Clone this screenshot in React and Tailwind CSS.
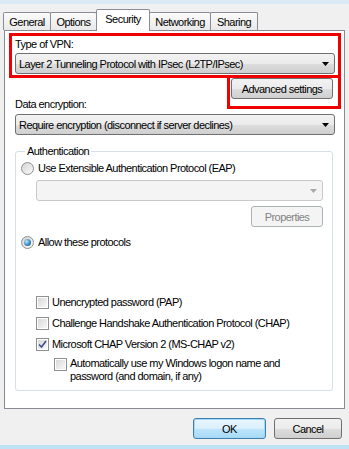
import { useState } from 'react'

const font = { fontFamily: '"Liberation Sans", Arial, sans-serif' }

const txt = 'text-[11px] leading-[14px] tracking-[-0.55px]'
const btnBg = 'bg-[linear-gradient(to_bottom,#f2f2f2_0%,#ebebeb_50%,#dddddd_51%,#cfcfcf_100%)]'

function Arrow({ color = '#000' }) {
  return (
    <svg width="7" height="4" viewBox="0 0 7 4">
      <path d="M0 0 L7 0 L3.5 4 Z" fill={color} />
    </svg>
  )
}

function Dropdown({ value, width }) {
  return (
    <div className={`h-[21px] ${width} border border-[#707070] rounded-[3px] ${btnBg} flex items-center justify-between pl-[3px] pr-[5px]`}>
      <span className={`${txt} whitespace-nowrap`}>{value}</span>
      <Arrow />
    </div>
  )
}

function Radio({ checked, label, onClick }) {
  return (
    <div className="flex items-center h-[14px] gap-[4px] cursor-default" onClick={onClick}>
      <div className="w-[13px] h-[13px] rounded-full border border-[#8e8f8f] bg-[linear-gradient(135deg,#d4d4d4,#fafafa)] flex items-center justify-center">
        {checked && <div className="w-[7px] h-[7px] rounded-full bg-[radial-gradient(circle_at_35%_35%,#bfe6fb,#3a8bc2_55%,#17507d)]" />}
      </div>
      <span className={`${txt} whitespace-nowrap`}>{label}</span>
    </div>
  )
}

function Check({ checked, onClick }) {
  return (
    <div onClick={onClick} className="w-[13px] h-[13px] shrink-0 border border-[#8e8f8f] bg-white p-px">
      <div className="w-full h-full bg-[linear-gradient(135deg,#d9d9d9,#f7f7f7)] flex items-center justify-center">
        {checked && (
          <svg width="9" height="9" viewBox="0 0 9 9">
            <path d="M1 4.5 L3.5 7 L8 1" stroke="#3c4f8f" strokeWidth="1.6" fill="none" />
          </svg>
        )}
      </div>
    </div>
  )
}

function CheckRow({ checked, label, onClick, className = '' }) {
  return (
    <div className={`flex items-center h-[14px] gap-[3px] ${className}`}>
      <Check checked={checked} onClick={onClick} />
      <span className={`${txt} whitespace-nowrap`}>{label}</span>
    </div>
  )
}

const tabs = [
  ['General', 'w-[48px]'],
  ['Options', 'w-[47px]'],
  ['Security', 'w-[54px]'],
  ['Networking', 'w-[62px]'],
  ['Sharing', 'w-[48px]'],
]

export default function App() {
  const [auth, setAuth] = useState('allow')
  const [pap, setPap] = useState(false)
  const [chap, setChap] = useState(false)
  const [mschap, setMschap] = useState(true)
  const [autoLogon, setAutoLogon] = useState(false)

  return (
    <div className="w-[349px] h-[449px] bg-[#f0f0f0] flex flex-col text-black overflow-hidden" style={font}>
      <div className="h-[4px] bg-[#d9eaf6]" />

      <div className="flex items-end h-[26px] pl-[3px] relative z-10">
        {tabs.map(([name, w]) => name === 'Security' ? (
          <div key={name} className={`${w} h-[22px] -ml-px -mb-px bg-white border border-b-0 border-[#898c95] rounded-t-[2px] flex items-start justify-center pt-[2px] ${txt}`}>
            {name}
          </div>
        ) : (
          <div key={name} className={`${w} h-[18px] -ml-px first:ml-0 border border-b-0 border-[#898c95] rounded-t-[2px] bg-[linear-gradient(to_bottom,#fbfbfb,#e9e9e9)] flex items-center justify-center ${txt}`}>
            {name}
          </div>
        ))}
      </div>

      <div className="ml-[4px] w-[341px] h-[379px] bg-white border border-[#898c95] flex flex-col">
        <div className="mt-[2px] ml-[4px] w-[332px] h-[45px] border-[3px] border-[#f00000] flex flex-col pl-[3px] pt-px">
          <div className={txt}>Type of VPN:</div>
          <div className="mt-[2px]">
            <Dropdown value="Layer 2 Tunneling Protocol with IPsec (L2TP/IPsec)" width="w-[320px]" />
          </div>
        </div>

        <div className="ml-[4px] w-[332px] -mt-[3px] flex justify-end">
          <div className="w-[114px] h-[34px] border-[3px] border-[#f00000] pl-px">
            <div className={`w-[102px] h-[21px] border border-[#707070] rounded-[3px] ${btnBg} flex items-center justify-center ${txt}`}>
              Advanced settings
            </div>
          </div>
        </div>

        <div className={`-mt-[12px] ml-[10px] ${txt}`}>Data encryption:</div>
        <div className="mt-[3px] ml-[10px]">
          <Dropdown value="Require encryption (disconnect if server declines)" width="w-[320px]" />
        </div>

        <fieldset className="mt-[9px] ml-[10px] w-[318px] h-[247px] border border-[#d5dfe5] rounded-[3px] pl-[5px] pr-[9px] flex flex-col">
          <legend className={`ml-[4px] px-[2px] ${txt}`}>Authentication</legend>

          <div className="mt-[3px]">
            <Radio checked={auth === 'eap'} label="Use Extensible Authentication Protocol (EAP)" onClick={() => setAuth('eap')} />
          </div>

          <div className="mt-[5px] ml-[15px] w-[287px] h-[21px] border border-[#c9c9c9] rounded-[3px] bg-[#f4f4f4] flex items-center justify-end pr-[5px]">
            <Arrow color="#a8a8a8" />
          </div>

          <div className={`mt-[5px] self-end w-[72px] h-[21px] border border-[#adb2b5] rounded-[3px] bg-[#f4f4f4] flex items-center justify-center ${txt} text-[#838383]`}>
            Properties
          </div>

          <div className="mt-[8px]">
            <Radio checked={auth === 'allow'} label="Allow these protocols" onClick={() => setAuth('allow')} />
          </div>

          <CheckRow className="mt-[46px] ml-[15px]" checked={pap} onClick={() => setPap(!pap)} label="Unencrypted password (PAP)" />
          <CheckRow className="mt-[7px] ml-[15px]" checked={chap} onClick={() => setChap(!chap)} label="Challenge Handshake Authentication Protocol (CHAP)" />
          <CheckRow className="mt-[7px] ml-[15px]" checked={mschap} onClick={() => setMschap(!mschap)} label="Microsoft CHAP Version 2 (MS-CHAP v2)" />

          <div className="mt-[6px] ml-[33px] flex items-start gap-[3px]">
            <div className="pt-px">
              <Check checked={autoLogon} onClick={() => setAutoLogon(!autoLogon)} />
            </div>
            <div className="text-[11px] leading-[13px] tracking-[-0.55px]">
              Automatically use my Windows logon name and<br />password (and domain, if any)
            </div>
          </div>
        </fieldset>
      </div>

      <div className="flex-1 flex justify-end items-start gap-[8px] pt-[9px] pr-[7px]">
        <div className={`w-[73px] h-[21px] border border-[#3c7fb1] rounded-[3px] bg-[linear-gradient(to_bottom,#eaf6fd_0%,#d9f0fc_50%,#bee6fd_51%,#a7d9f5_100%)] shadow-[inset_0_0_0_1px_#a6d7f3] flex items-center justify-center ${txt}`}>
          OK
        </div>
        <div className={`w-[68px] h-[21px] border border-[#707070] rounded-[3px] ${btnBg} flex items-center justify-center ${txt}`}>
          Cancel
        </div>
      </div>

      <div className="h-[4px] bg-[#bfe3f4]" />
    </div>
  )
}
